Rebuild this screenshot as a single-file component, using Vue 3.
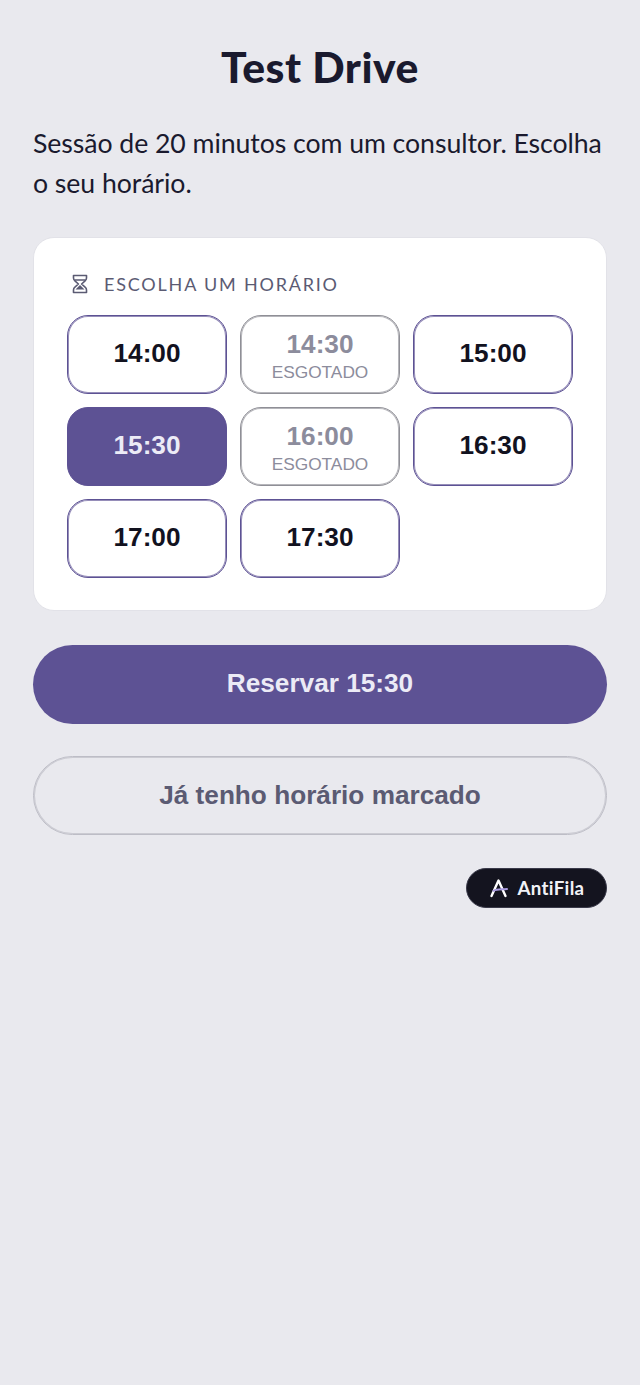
<script setup>
const slots = [
  { time: '14:00' },
  { time: '14:30', out: true },
  { time: '15:00' },
  { time: '15:30', selected: true },
  { time: '16:00', out: true },
  { time: '16:30' },
  { time: '17:00' },
  { time: '17:30' },
]
</script>

<template>
  <main class="page">
    <h1 class="title">Test Drive</h1>
    <p class="intro">Sessão de 20 minutos com um consultor. Escolha o seu horário.</p>

    <section class="card">
      <div class="label">
        <svg class="hourglass" width="16" height="20" viewBox="0 0 16 20" fill="none" stroke="#5b5b73" stroke-width="1.6" stroke-linejoin="round" stroke-linecap="round">
          <path d="M1.500 1.500h13v2.600c0 1.200-.5 2-1.400 2.700L9.600 10l3.500 3.200c.9.7 1.400 1.500 1.400 2.700v2.600h-13v-2.600c0-1.200.5-2 1.400-2.700L6.400 10 2.900 6.800C2 6.100 1.500 5.300 1.500 4.100z" />
          <path d="M3 6h10" />
          <path d="M8 11l4.500 4.500h-9z" fill="#5b5b73" stroke="none" />
        </svg>
        <span>ESCOLHA UM HORÁRIO</span>
      </div>
      <div class="grid">
        <button
          v-for="s in slots"
          :key="s.time"
          class="slot"
          :class="{ out: s.out, selected: s.selected }"
        >
          <span class="time">{{ s.time }}</span>
          <span v-if="s.out" class="sold">ESGOTADO</span>
        </button>
      </div>
    </section>

    <button class="cta primary">Reservar 15:30</button>
    <button class="cta secondary">Já tenho horário marcado</button>

    <div class="badge-row">
      <div class="badge">
        <svg width="20" height="20" viewBox="0 0 20 20" fill="none" stroke-linecap="round">
          <path d="M2.500 18L9.500 2.500 16.500 18" stroke="#ffffff" stroke-width="2.400" stroke-linejoin="round" />
          <path d="M4.500 12.800C8 11 12 11.600 18 11" stroke="#a99be0" stroke-width="2" />
        </svg>
        <span>AntiFila</span>
      </div>
    </div>
  </main>
</template>

<style scoped>
.page {
  box-sizing: border-box;
  width: 640px;
  min-height: 1385px;
  padding: 40px 33px 0;
  background: #e9e9ee;
  display: flex;
  flex-direction: column;
  font-family: Lato, "Open Sans", sans-serif;
}
.title {
  margin: 0;
  text-align: center;
  font-size: 42.670px;
  line-height: 54px;
  font-weight: 900;
  letter-spacing: 0.5px;
  color: #1a1a2e;
}
.intro {
  margin: 29px 0 0;
  font-size: 26.670px;
  line-height: 40px;
  letter-spacing: -0.06px;
  color: #1a1a2e;
}
.card {
  box-sizing: border-box;
  margin-top: 34px;
  height: 374px;
  padding: 32px 33px 0;
  background: #fff;
  border: 1px solid #e2e2e8;
  border-radius: 21px;
}
.label {
  display: flex;
  align-items: center;
  gap: 16px;
  height: 28px;
  padding-left: 5px;
  font-size: 18px;
  letter-spacing: 1.800px;
  color: #5b5b73;
}
.hourglass {
  flex: none;
}
.grid {
  margin-top: 17px;
  display: grid;
  grid-template-columns: repeat(3, 1fr);
  grid-auto-rows: 79px;
  gap: 13px;
}
.slot {
  box-sizing: border-box;
  padding: 0 0 2px;
  display: flex;
  flex-direction: column;
  align-items: center;
  justify-content: center;
  background: #fff;
  border: 1px solid #5d5294;
  box-shadow: inset 0 0 0 1px rgba(93, 82, 148, 0.65);
  border-radius: 21px;
  color: #12121f;
  font-family: "Liberation Sans", Arial, sans-serif;
}
.time {
  font-size: 26.200px;
  line-height: 31px;
  font-weight: 700;
}
.sold {
  margin-top: 2px;
  font-size: 17.300px;
  line-height: 20px;
  color: #8c8c9c;
}
.slot.out {
  padding: 2px 0 0;
  border-color: #8f8f96;
  box-shadow: inset 0 0 0 1px rgba(143, 143, 150, 0.65);
}
.slot.out .time {
  color: #8c8c9c;
}
.slot.selected {
  background: #5d5294;
  color: #ecebf6;
}
.cta {
  box-sizing: border-box;
  width: 100%;
  height: 79px;
  border-radius: 40px;
  font-family: "Liberation Sans", Arial, sans-serif;
  font-size: 26.200px;
  font-weight: 700;
}
.primary {
  margin-top: 34px;
  padding: 0 0 2px;
  background: #5d5294;
  border: none;
  color: #ecebf6;
}
.secondary {
  margin-top: 32px;
  background: transparent;
  border: 1px solid #bdbdc6;
  box-shadow: inset 0 0 0 1px rgba(189, 189, 198, 0.7);
  color: #5b5b73;
}
.badge-row {
  margin-top: 33px;
  display: flex;
  justify-content: flex-end;
}
.badge {
  box-sizing: border-box;
  width: 141px;
  height: 40px;
  display: flex;
  align-items: center;
  justify-content: center;
  gap: 9px;
  background: #14141f;
  border: 1px solid #3a3a4a;
  border-radius: 20px;
  color: #f2f2f6;
  font-size: 18.700px;
  font-weight: 700;
  letter-spacing: 0.3px;
}
</style>
